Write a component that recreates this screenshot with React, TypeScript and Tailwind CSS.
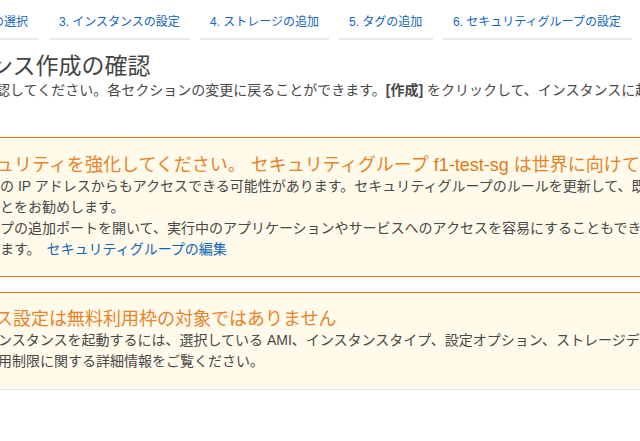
import React from "react";

const tabs = [
  { label: "3. インスタンスの設定", w: "w-[141px]" },
  { label: "4. ストレージの追加", w: "w-[129px]" },
  { label: "5. タグの追加", w: "w-[94px]" },
  { label: "6. セキュリティグループの設定", w: "w-[189px]" },
  { label: "7. 確認", w: "w-[120px]" },
];

export default function App() {
  return (
    <div className="w-[640px] h-[441px] overflow-hidden bg-white text-[#484848] font-['Liberation_Sans','Noto_Sans_CJK_JP',sans-serif]">
      {/* Wizard steps */}
      <div className="flex gap-[10px] h-[40px]">
        <div className="w-[39px] shrink-0 flex justify-end overflow-hidden pt-[14px] pb-[7px] pr-[11px] border-b-2 border-[#eaeaea] text-[12px] leading-4 text-[#1166bb] whitespace-nowrap">
          2. インスタンスタイプの選択
        </div>
        {tabs.map((t) => (
          <div
            key={t.label}
            className={`${t.w} shrink-0 pt-[14px] pb-[7px] pl-[10px] border-b-2 border-[#eaeaea] text-[12px] leading-4 text-[#1166bb] whitespace-nowrap`}
          >
            {t.label}
          </div>
        ))}
      </div>

      {/* Title */}
      <h1 className="mt-[12px] -ml-[10px] text-[23px] leading-[28px] whitespace-nowrap text-[#444]">
        ンス作成の確認
      </h1>
      <p className="-ml-[4px] text-[14px] leading-[20px] whitespace-nowrap">
        認してください。各セクションの変更に戻ることができます。<b className="font-bold">[作成]</b> をクリックして、インスタンスに起動プロセスを完了させます。
      </p>

      {/* Security warning */}
      <div className="mt-[37px] border-t border-b border-t-[#e07b0d] border-b-[#e07b0d] bg-[#fffaea] pt-4 pb-[16px] whitespace-nowrap">
        <div className="-ml-[4px] text-[18px] leading-[22px] text-[#e8832a]">
          ュリティを強化してください。 セキュリティグループ <span className="text-[#e07a16]">f1-test-sg</span> は世界に向けて開かれています。
        </div>
        <div className="text-[14px] leading-[21px]">
          <div>の IP アドレスからもアクセスできる可能性があります。セキュリティグループのルールを更新して、既知の IP アドレスからのみアクセスを許可</div>
          <div>とをお勧めします。</div>
          <div>プの追加ポートを開いて、実行中のアプリケーションやサービスへのアクセスを容易にすることもできます</div>
          <div>
            ます。 <a className="ml-[2px] text-[#1166bb]">セキュリティグループの編集</a>
          </div>
        </div>
      </div>

      {/* Free tier notice */}
      <div className="mt-[15px] border-t border-b border-t-[#e07b0d] border-b-[#e5e5e5] bg-[#fffaea] pt-[15px] pb-[17px] whitespace-nowrap">
        <div className="-ml-[5px] text-[18px] leading-[22px] text-[#e8832a]">
          ス設定は無料利用枠の対象ではありません
        </div>
        <div className="-ml-[2px] text-[14px] leading-[21px]">
          <div>ンスタンスを起動するには、選択している AMI、インスタンスタイプ、設定オプション、ストレージデバイスが無料利用枠の対象となっている必要があります</div>
          <div>用制限に関する詳細情報をご覧ください。</div>
        </div>
      </div>
    </div>
  );
}
